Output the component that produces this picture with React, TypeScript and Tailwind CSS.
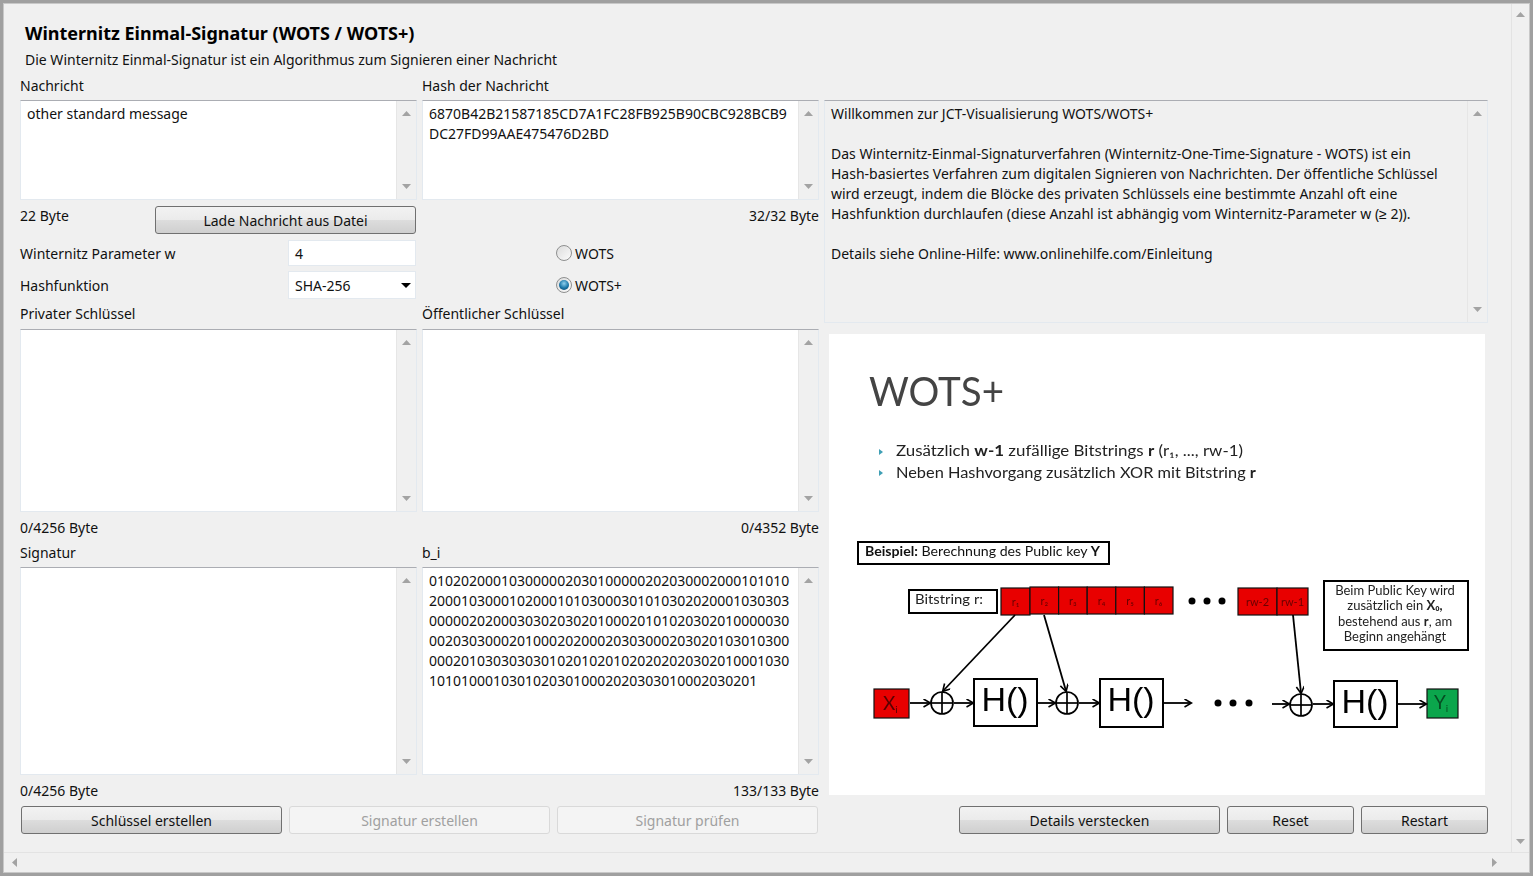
const hashLines = ["6870B42B21587185CD7A1FC28FB925B90CBC928BCB9", "DC27FD99AAE475476D2BD"];
const biLines = [
  "010202000103000002030100000202030002000101010",
  "200010300010200010103000301010302020001030303",
  "000002020003030203020100020101020302010000030",
  "002030300020100020200020303000203020103010300",
  "000201030303030102010201020202020302010001030",
  "10101000103010203010002020303010002030201",
];
const infoLines = [
  "Willkommen zur JCT-Visualisierung WOTS/WOTS+",
  "",
  "Das Winternitz-Einmal-Signaturverfahren (Winternitz-One-Time-Signature - WOTS) ist ein",
  "Hash-basiertes Verfahren zum digitalen Signieren von Nachrichten. Der öffentliche Schlüssel",
  "wird erzeugt, indem die Blöcke des privaten Schlüssels eine bestimmte Anzahl oft eine",
  "Hashfunktion durchlaufen (diese Anzahl ist abhängig vom Winternitz-Parameter w (≥ 2)).",
  "",
  "Details siehe Online-Hilfe: www.onlinehilfe.com/Einleitung",
];

function Arrow({ dir }: { dir: "up" | "down" | "left" | "right" }) {
  const points = {
    up: "0,5 4.5,0 9,5",
    down: "0,0 9,0 4.5,5",
    left: "5,0 5,9 0,4.5",
    right: "0,0 0,9 5,4.5",
  }[dir];
  const wide = dir === "up" || dir === "down";
  return (
    <svg width={wide ? 9 : 5} height={wide ? 5 : 9} className="block">
      <polygon points={points} fill="#a3a3a3" />
    </svg>
  );
}

function ScrollTrack() {
  return (
    <div className="flex w-[20px] shrink-0 flex-col items-center justify-between border-l border-[#e6e6e6] bg-[#f0f0f0] py-[10px]">
      <Arrow dir="up" />
      <Arrow dir="down" />
    </div>
  );
}

function TextBox({ height, lines = [] }: { height: string; lines?: string[] }) {
  return (
    <div className={`flex ${height} border border-[#e3e9ef] border-t-[#abadb3] bg-white`}>
      <div className="min-w-0 flex-1 px-[6px] py-[3px] leading-[20px] whitespace-pre">
        {lines.map((l, i) => (
          <div key={i}>{l}</div>
        ))}
      </div>
      <ScrollTrack />
    </div>
  );
}

function Button({ label, width, disabled }: { label: string; width: string; disabled?: boolean }) {
  return (
    <div
      className={
        disabled
          ? `flex h-[28px] ${width} items-center justify-center rounded-[3px] border border-[#d9d9d9] bg-[#f4f4f4] text-[#a0a0a0]`
          : `flex h-[28px] ${width} items-center justify-center rounded-[3px] border border-[#707070] bg-[linear-gradient(#f2f2f2_0%,#ebebeb_50%,#dddddd_50%,#cfcfcf_100%)]`
      }
    >
      {label}
    </div>
  );
}

function Radio({ label, checked }: { label: string; checked?: boolean }) {
  return (
    <div className="flex h-[28px] items-center gap-[3px]">
      <span className="flex h-[16px] w-[16px] items-center justify-center rounded-full border border-[#8e8f8f] bg-[linear-gradient(135deg,#dcdcdc,#fbfbfb)]">
        {checked && (
          <span className="h-[10px] w-[10px] rounded-full bg-[radial-gradient(circle_at_50%_35%,#8fd0ee,#1a76a8_55%,#0b3f63)]" />
        )}
      </span>
      <span>{label}</span>
    </div>
  );
}

function RedCell({ x, y, w, h, label }: { x: number; y: number; w: number; h: number; label: string }) {
  return (
    <g>
      <rect x={x} y={y} width={w} height={h} fill="#e80000" stroke="#111" strokeWidth="1.2" />
      <text x={x + w / 2} y={y + h / 2 + 4} textAnchor="middle" fontSize="11" fill="#6a0000">
        {label}
      </text>
    </g>
  );
}

function Line({ x1, y1, x2, y2 }: { x1: number; y1: number; x2: number; y2: number }) {
  return <line x1={x1} y1={y1} x2={x2} y2={y2} stroke="#000" strokeWidth="1.8" markerEnd="url(#head)" />;
}

function Xor({ x, y }: { x: number; y: number }) {
  return (
    <g fill="none" stroke="#000" strokeWidth="1.7">
      <circle cx={x} cy={y} r="11" />
      <line x1={x - 11} y1={y} x2={x + 11} y2={y} />
      <line x1={x} y1={y - 11} x2={x} y2={y + 11} />
    </g>
  );
}

function HashBox({ x, y, h }: { x: number; y: number; h: number }) {
  return (
    <g>
      <rect x={x} y={y} width="63" height={h} fill="#fff" stroke="#000" strokeWidth="2" />
      <text x={x + 31} y={y + 32} textAnchor="middle" fontSize="34" fill="#000" fontFamily="Liberation Sans">
        H()
      </text>
    </g>
  );
}

function Diagram() {
  const cells = ["r₂", "r₃", "r₄", "r₅", "r₆"];
  return (
    <svg viewBox="829 334 656 461" className="block h-[461px] w-[656px] bg-white font-['Lato',sans-serif] blur-[0.3px]">
      <defs>
        <marker id="head" markerWidth="9" markerHeight="9" refX="7.5" refY="4" orient="auto" markerUnits="userSpaceOnUse">
          <path d="M1 0 L8 4 L1 8" fill="none" stroke="#000" strokeWidth="1.6" />
        </marker>
      </defs>

      <text x="869" y="406" fontSize="40" fill="#444" textLength="135" lengthAdjust="spacingAndGlyphs">
        WOTS+
      </text>
      <polygon points="879,449 883,452 879,455" fill="#3f9fb5" />
      <polygon points="879,470 883,473 879,476" fill="#3f9fb5" />
      <text x="896" y="456" fontSize="14.5" fill="#222" textLength="347" lengthAdjust="spacingAndGlyphs">
        Zusätzlich <tspan fontWeight="700">w-1</tspan> zufällige Bitstrings <tspan fontWeight="700">r</tspan> (r₁, ..., rw-1)
      </text>
      <text x="896" y="478" fontSize="14.5" fill="#222" textLength="360" lengthAdjust="spacingAndGlyphs">
        Neben Hashvorgang zusätzlich XOR mit Bitstring <tspan fontWeight="700">r</tspan>
      </text>

      <rect x="858" y="542" width="251" height="22" fill="#fff" stroke="#000" strokeWidth="2" />
      <text x="865" y="556" fontSize="13" fill="#111" textLength="235" lengthAdjust="spacingAndGlyphs">
        <tspan fontWeight="700">Beispiel:</tspan> Berechnung des Public key <tspan fontWeight="700">Y</tspan>
      </text>

      <rect x="909" y="590" width="88" height="23" fill="#fff" stroke="#000" strokeWidth="2" />
      <text x="915" y="604" fontSize="13" fill="#222" textLength="68" lengthAdjust="spacingAndGlyphs">
        Bitstring r:
      </text>

      <RedCell x={1001} y={588} w={29} h={27} label="r₁" />
      {cells.map((c, i) => (
        <RedCell key={c} x={1030 + i * 28.6} y={587} w={28.6} h={27} label={c} />
      ))}
      <RedCell x={1238} y={588} w={39} h={27} label="rw-2" />
      <RedCell x={1277} y={588} w={31} h={27} label="rw-1" />

      {[1192, 1207, 1222].map((x) => (
        <circle key={x} cx={x} cy="601" r="3.5" fill="#000" />
      ))}
      {[1218, 1233, 1249].map((x) => (
        <circle key={x} cx={x} cy="703" r="3.5" fill="#000" />
      ))}

      <rect x="1324" y="581" width="144" height="69" fill="#fff" stroke="#000" strokeWidth="2" />
      <g fontSize="13" fill="#222" textAnchor="middle">
        <text x="1395" y="595">Beim Public Key wird</text>
        <text x="1395" y="610">
          zusätzlich ein <tspan fontWeight="700">X₀,</tspan>
        </text>
        <text x="1395" y="626">
          bestehend aus <tspan fontWeight="700">r</tspan>, am
        </text>
        <text x="1395" y="641">Beginn angehängt</text>
      </g>

      <rect x="874" y="689" width="35" height="29" fill="#e80000" stroke="#111" strokeWidth="1.2" />
      <text x="883" y="710" fontSize="19" fill="#5a0000">
        X<tspan fontSize="10" dy="3">i</tspan>
      </text>
      <rect x="1427" y="689" width="31" height="29" fill="#0ba64c" stroke="#111" strokeWidth="1.2" />
      <text x="1434" y="709" fontSize="19" fill="#064d22">
        Y<tspan fontSize="10" dy="3">i</tspan>
      </text>

      <Xor x={942} y={703} />
      <Xor x={1067} y={703} />
      <Xor x={1301} y={705} />
      <HashBox x={974} y={679} h={47} />
      <HashBox x={1100} y={679} h={48} />
      <HashBox x={1334} y={681} h={46} />

      <Line x1={910} y1={703} x2={930} y2={703} />
      <Line x1={954} y1={703} x2={973} y2={703} />
      <Line x1={1038} y1={703} x2={1055} y2={703} />
      <Line x1={1079} y1={703} x2={1099} y2={703} />
      <Line x1={1164} y1={703} x2={1191} y2={703} />
      <Line x1={1272} y1={704} x2={1289} y2={704} />
      <Line x1={1313} y1={704} x2={1333} y2={704} />
      <Line x1={1398} y1={704} x2={1426} y2={704} />
      <Line x1={1015} y1={615} x2={943} y2={691} />
      <Line x1={1044} y1={615} x2={1066} y2={691} />
      <Line x1={1293} y1={615} x2={1301} y2={693} />
    </svg>
  );
}

export default function App() {
  return (
    <div className="h-[876px] w-[1533px] overflow-hidden bg-white font-['Noto_Sans',sans-serif] text-[14px] text-[#111]">
      <div className="flex h-full flex-col border-[3px] border-[#a0a0a0]">
        <div className="flex flex-1 border border-[#c8c8c8] bg-[#f0f0f0]">
          <div className="flex min-w-0 flex-1 flex-col">
            <div className="flex min-h-0 flex-1">
              <main className="min-w-0 flex-1 pl-[16px] pt-[18px]">
                <h1 className="pl-[5px] text-[18px] leading-[22px] font-bold text-black">
                  Winternitz Einmal-Signatur (WOTS / WOTS+)
                </h1>
                <p className="mt-[6px] h-[20px] pl-[5px] leading-[20px]">
                  Die Winternitz Einmal-Signatur ist ein Algorithmus zum Signieren einer Nachricht
                </p>
                <div className="mt-[6px] flex gap-[5px]">
                  <div className="w-[799px]">
                    <div className="grid grid-cols-[397px_397px] gap-x-[5px]">
                      <label className="mb-[4px] h-[20px] leading-[20px]">Nachricht</label>
                      <label className="mb-[4px] h-[20px] leading-[20px]">Hash der Nachricht</label>
                      <TextBox height="h-[100px]" lines={["other standard message"]} />
                      <TextBox height="h-[100px]" lines={hashLines} />
                    </div>
                    <div className="mt-[6px] grid grid-cols-[397px_397px] gap-x-[5px]">
                      <div className="flex items-start justify-between">
                        <span className="leading-[20px]">22 Byte</span>
                        <div className="mr-px">
                          <Button label="Lade Nachricht aus Datei" width="w-[261px]" />
                        </div>
                      </div>
                      <div className="pt-0 text-right leading-[20px]">32/32 Byte</div>
                    </div>
                    <div className="mt-[6px] grid grid-cols-[397px_397px] gap-x-[5px]">
                      <div className="flex flex-col gap-[5px]">
                        <div className="flex h-[26px] items-center justify-between">
                          <span>Winternitz Parameter w</span>
                          <div className="mr-px flex h-[26px] w-[128px] items-center border border-[#e3e9ef] bg-white px-[6px]">
                            4
                          </div>
                        </div>
                        <div className="flex h-[28px] items-center justify-between">
                          <span>Hashfunktion</span>
                          <div className="mr-px flex h-[28px] w-[128px] items-center justify-between border border-[#e3e9ef] bg-white pr-[4px] pl-[6px]">
                            <span>SHA-256</span>
                            <svg width="10" height="5">
                              <polygon points="0,0 10,0 5,5" fill="#000" />
                            </svg>
                          </div>
                        </div>
                      </div>
                      <div className="-mt-px flex flex-col gap-[4px] pl-[134px]">
                        <Radio label="WOTS" />
                        <Radio label="WOTS+" checked />
                      </div>
                    </div>
                    <div className="mt-[5px] grid grid-cols-[397px_397px] gap-x-[5px]">
                      <label className="mb-[5px] h-[20px] leading-[20px]">Privater Schlüssel</label>
                      <label className="mb-[5px] h-[20px] leading-[20px]">Öffentlicher Schlüssel</label>
                      <TextBox height="h-[183px]" />
                      <TextBox height="h-[183px]" />
                      <div className="mt-[6px] h-[20px] leading-[20px]">0/4256 Byte</div>
                      <div className="mt-[6px] h-[20px] text-right leading-[20px]">0/4352 Byte</div>
                      <label className="mt-[5px] mb-[4px] h-[20px] leading-[20px]">Signatur</label>
                      <label className="mt-[5px] mb-[4px] h-[20px] leading-[20px]">b_i</label>
                      <TextBox height="h-[208px]" />
                      <TextBox height="h-[208px]" lines={biLines} />
                      <div className="mt-[6px] h-[20px] leading-[20px]">0/4256 Byte</div>
                      <div className="mt-[6px] h-[20px] text-right leading-[20px]">133/133 Byte</div>
                    </div>
                    <div className="mt-[5px] flex gap-[7px] pl-px">
                      <Button label="Schlüssel erstellen" width="w-[261px]" />
                      <Button label="Signatur erstellen" width="w-[261px]" disabled />
                      <Button label="Signatur prüfen" width="w-[261px]" disabled />
                    </div>
                  </div>
                  <div className="mt-[24px] w-[664px]">
                    <div className="flex h-[223px] border border-[#e3e9ef] border-t-[#abadb3] bg-[#f0f0f0]">
                      <div className="min-w-0 flex-1 px-[6px] py-[3px] leading-[20px] whitespace-pre">
                        {infoLines.map((l, i) => (
                          <div key={i} className="h-[20px]">
                            {l}
                          </div>
                        ))}
                      </div>
                      <ScrollTrack />
                    </div>
                    <div className="mx-[5px] mt-[11px]">
                      <Diagram />
                    </div>
                    <div className="mt-[11px] flex justify-end gap-[7px]">
                      <Button label="Details verstecken" width="w-[261px]" />
                      <Button label="Reset" width="w-[127px]" />
                      <Button label="Restart" width="w-[127px]" />
                    </div>
                  </div>
                </div>
              </main>
              <div className="flex w-[18px] shrink-0 flex-col items-center justify-between border-l border-[#e3e3e3] bg-[#f0f0f0] py-[8px]">
                <Arrow dir="up" />
                <Arrow dir="down" />
              </div>
            </div>
            <div className="flex h-[20px] shrink-0 items-center justify-between border-t border-[#e3e3e3] px-[8px]">
              <Arrow dir="left" />
              <div className="mr-[24px]">
                <Arrow dir="right" />
              </div>
            </div>
          </div>
        </div>
      </div>
    </div>
  );
}
